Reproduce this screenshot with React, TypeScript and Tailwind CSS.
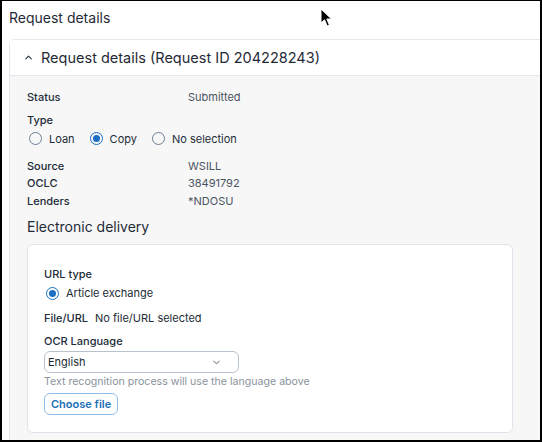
import { ChevronUp, ChevronDown } from "lucide-react";

function Radio({ checked, label }: { checked?: boolean; label: string }) {
  return (
    <label className="flex h-[16px] items-center gap-[7px]">
      {checked ? (
        <span className="flex h-[13px] w-[13px] items-center justify-center rounded-full border-[1.5px] border-[#1a6fc4]">
          <span className="h-[7px] w-[7px] rounded-full bg-[#1a6fc4]" />
        </span>
      ) : (
        <span className="h-[13px] w-[13px] rounded-full border-[1.5px] border-[#6b7f93]" />
      )}
      <span className="text-[11px] leading-[16px] text-[#222c37]">{label}</span>
    </label>
  );
}

function Field({ label, value }: { label: string; value: string }) {
  return (
    <div className="flex h-[17.5px] items-center text-[11px] leading-[17px]">
      <span className="w-[161px] font-medium text-[#222c37]">{label}</span>
      <span className="text-[#4a5561]">{value}</span>
    </div>
  );
}

export default function App() {
  return (
    <div className="h-[442px] w-[542px] bg-black pt-px pl-[2px] pr-[2px] pb-[2px] font-['Inter',sans-serif]">
      <div className="relative h-full w-full overflow-hidden bg-white">
        {/* page heading */}
        <div className="flex h-[38px] items-center pb-[4px] pl-[7px] text-[14px] leading-[20px] text-[#1f2a36]">
          Request details
        </div>

        {/* pointer */}
        <svg className="absolute left-[318px] top-[7px]" width="14" height="20" viewBox="0 0 14 20">
          <path d="M1 1 L1 15 L4.5 11.8 L7.2 18 L9.4 17 L6.8 11 L11.5 11 Z" fill="#000" stroke="#fff" strokeWidth="1" />
        </svg>

        <div className="ml-[7px] mr-[-12px] h-[420px] rounded-tl-md border border-[#e3e8ee] bg-[#f7f7f8]">
          <div className="flex h-[36px] items-center gap-[7px] border-b border-[#e3e8ee] bg-white pl-[13px]">
            <ChevronUp className="h-[11px] w-[11px] text-[#2b3540]" strokeWidth={2.4} />
            <span className="text-[14.5px] leading-[20px] text-[#1f2a36]">Request details (Request ID 204228243)</span>
          </div>

          <div className="pl-[17px] pt-[13px]">
            <Field label="Status" value="Submitted" />
            <div className="mt-[5px] text-[11px] font-medium leading-[17px] text-[#222c37]">Type</div>
            <div className="mt-[2px] flex gap-[15px] pl-[2px]">
              <Radio label="Loan" />
              <Radio checked label="Copy" />
              <Radio label="No selection" />
            </div>
            <div className="mt-[11px]">
              <Field label="Source" value="WSILL" />
              <Field label="OCLC" value="38491792" />
              <Field label="Lenders" value="*NDOSU" />
            </div>

            <div className="mt-[7px] text-[14px] leading-[20px] text-[#1f2a36]">Electronic delivery</div>

            <div className="mt-[7px] w-[486px] rounded-md border border-[#dde3ea] bg-white pb-[17px] pl-[16px] pt-[21px]">
              <div className="text-[11px] font-medium leading-[17px] text-[#222c37]">URL type</div>
              <div className="mt-[2px] pl-[2px]">
                <Radio checked label="Article exchange" />
              </div>
              <div className="mt-[9px] flex gap-[7px] text-[11px] leading-[17px]">
                <span className="font-medium text-[#222c37]">File/URL</span>
                <span className="text-[#222c37]">No file/URL selected</span>
              </div>
              <div className="mt-[6px] text-[11px] font-medium leading-[17px] text-[#222c37]">OCR Language</div>
              <div className="mt-px flex h-[22px] w-[195px] items-center justify-between rounded-md border border-[#b9c3cd] pl-[3px] pr-[16px] text-[11px] text-[#222c37]">
                English
                <ChevronDown className="h-[11px] w-[11px] text-[#4a5561]" strokeWidth={2} />
              </div>
              <div className="mt-px text-[10.6px] leading-[16px] text-[#8a939c]">
                Text recognition process will use the language above
              </div>
              <button className="mt-[3px] flex h-[22px] items-center rounded-md border border-[#8fbde6] px-[6px] text-[11px] font-semibold text-[#1a6fb5]">
                Choose file
              </button>
            </div>
          </div>
        </div>
      </div>
    </div>
  );
}
